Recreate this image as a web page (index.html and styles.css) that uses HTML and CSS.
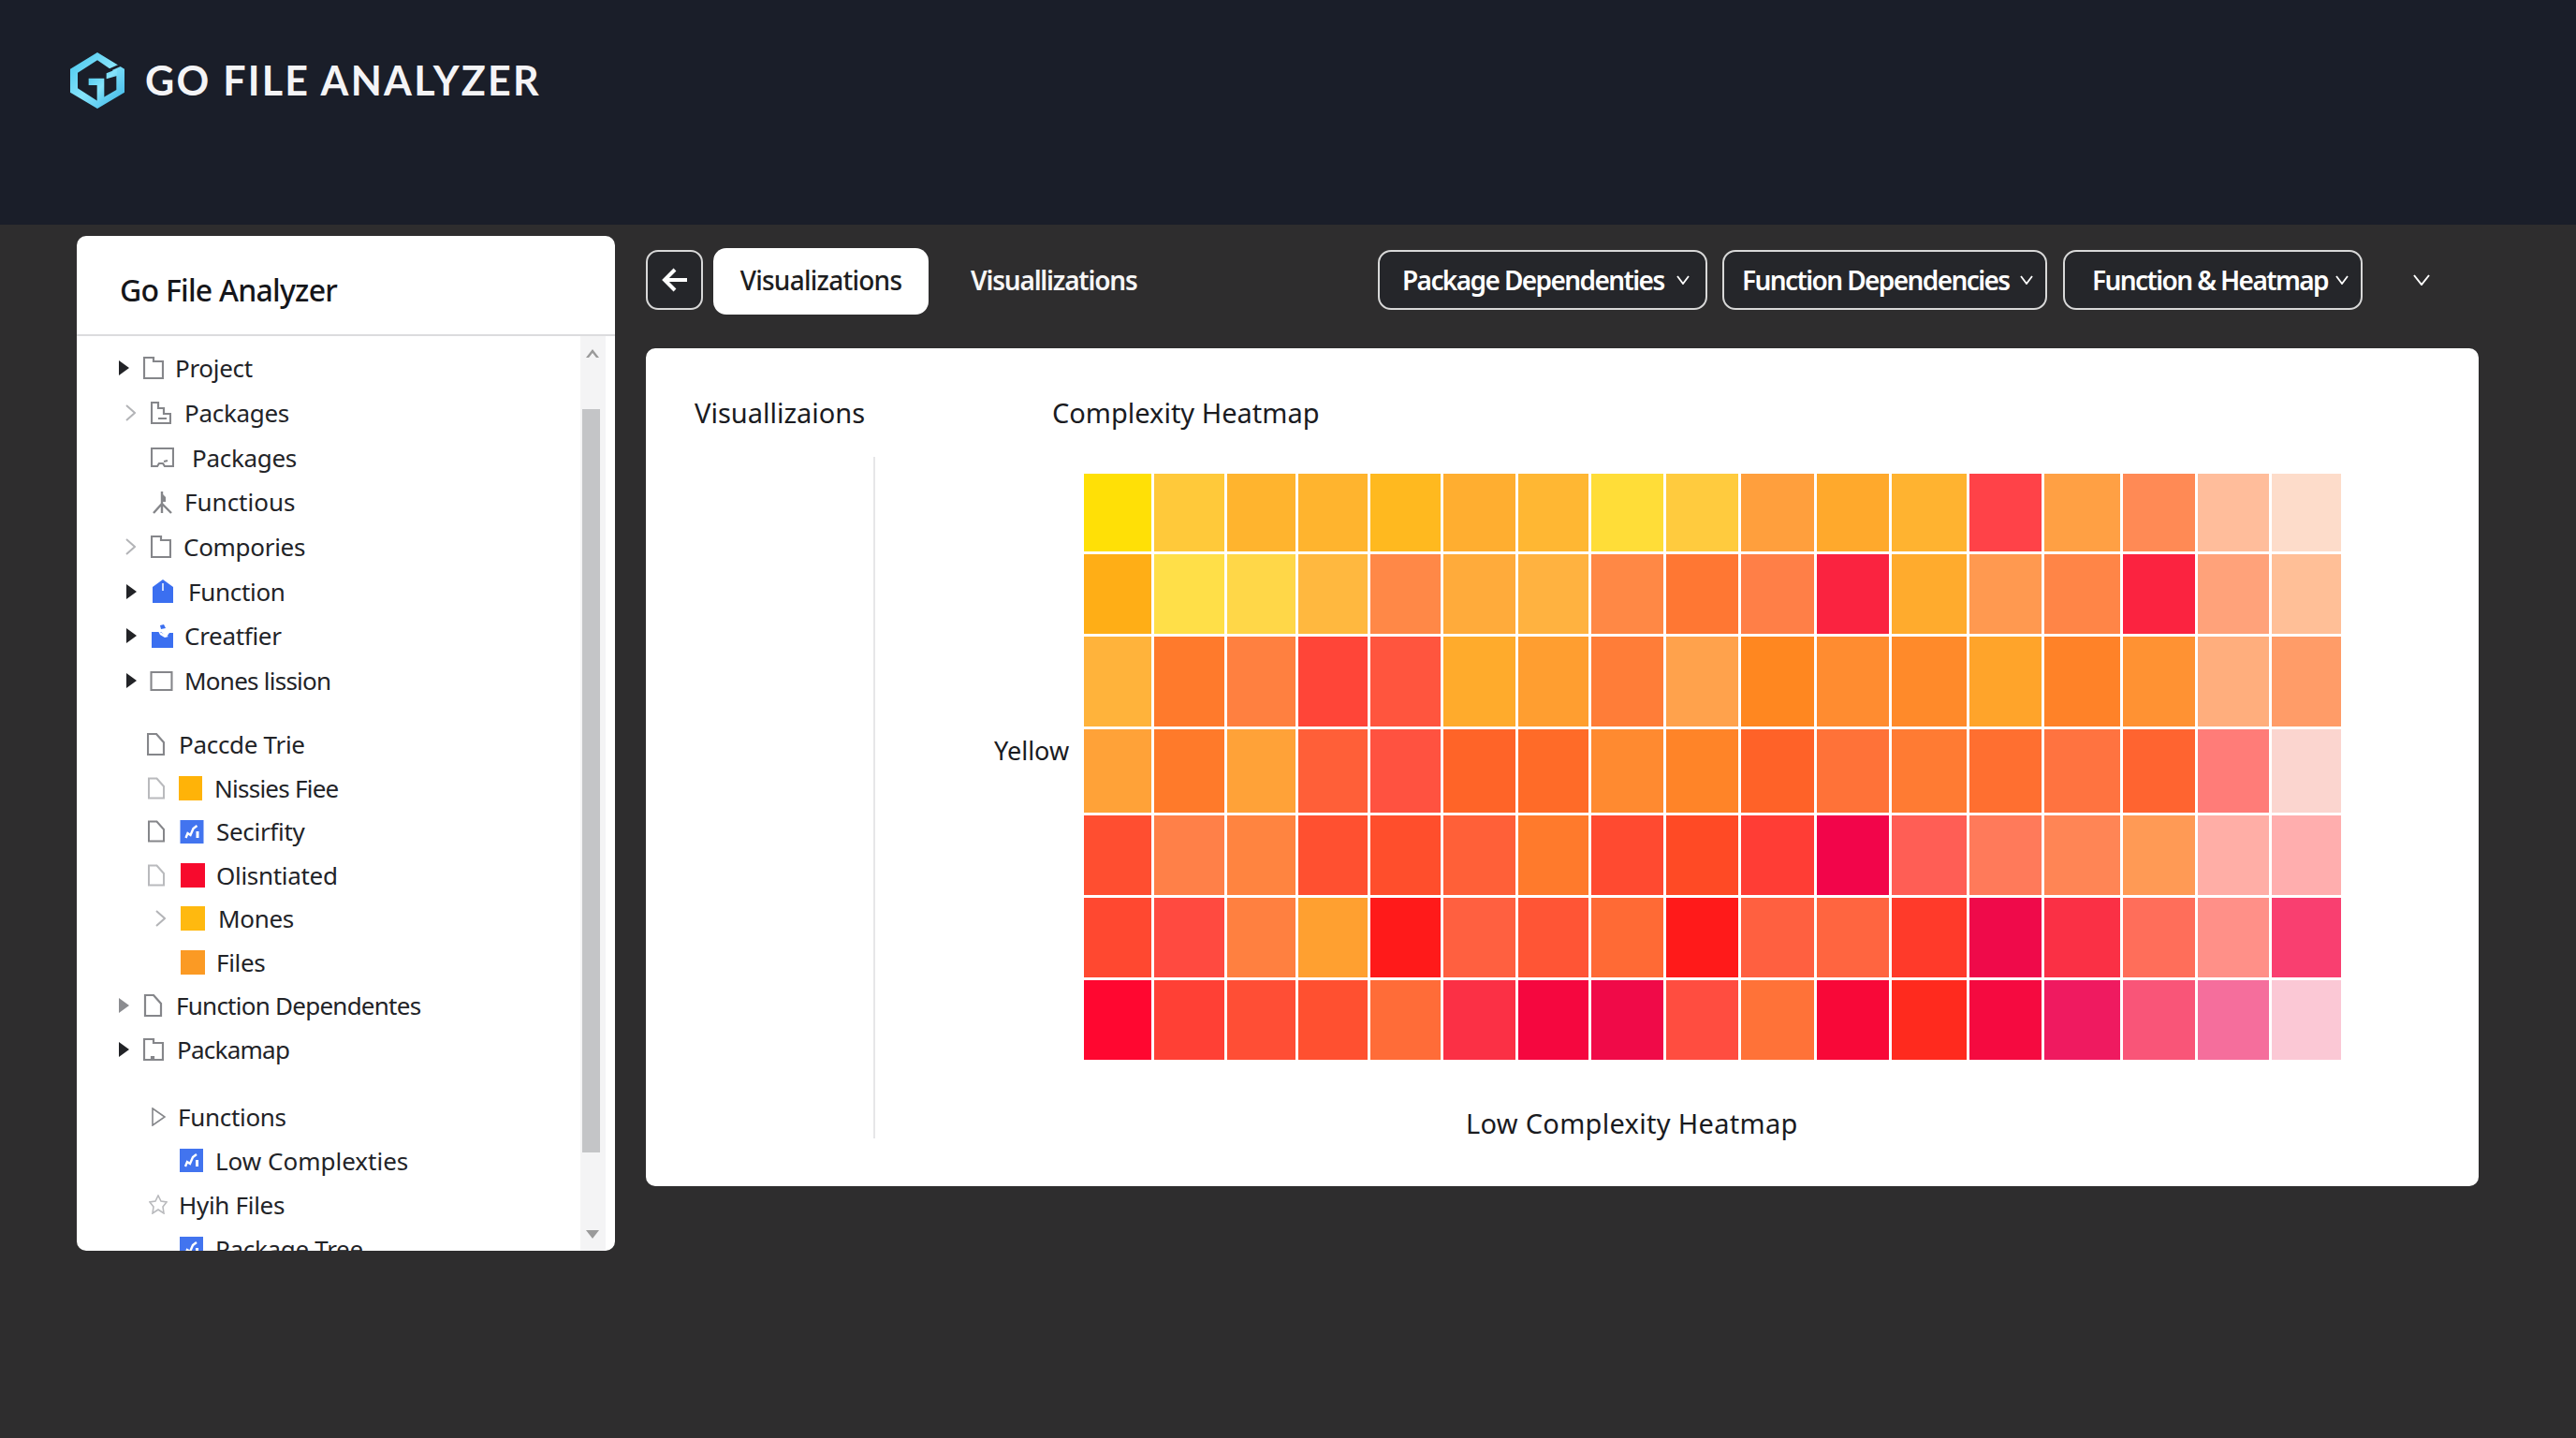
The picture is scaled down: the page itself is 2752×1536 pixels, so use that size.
FILE: index.html
```html
<!DOCTYPE html>
<html lang="en">
<head>
<meta charset="utf-8">
<title>Go File Analyzer</title>
<link rel="stylesheet" href="styles.css">
</head>
<body>
<svg class="defs" aria-hidden="true">
  <symbol id="caret" viewBox="0 0 11 16"><path d="M0 0L11 8L0 16Z" fill="currentColor"/></symbol>
  <symbol id="chev" viewBox="0 0 11 18"><path d="M1 1L10 9L1 17" fill="none" stroke="currentColor" stroke-width="2"/></symbol>
  <symbol id="folder" viewBox="0 0 22 24"><path d="M1 1H11V5H21V23H1Z" fill="none" stroke="currentColor" stroke-width="2.2"/></symbol>
  <symbol id="stair" viewBox="0 0 22 24"><path d="M1 1H8V7H14V13H21V23H1Z M8 18H17" fill="none" stroke="currentColor" stroke-width="2.2"/></symbol>
  <symbol id="tray" viewBox="0 0 25 21"><path d="M1 1H24V20H15L13 17L9 17L7 20H1Z M14 15L18 14" fill="none" stroke="currentColor" stroke-width="2.2"/></symbol>
  <symbol id="fork" viewBox="0 0 21 25"><path d="M10 1V24M10 14L1 24M10 14L20 24" fill="none" stroke="currentColor" stroke-width="2.4"/><path d="M9 2L14 7V12H9Z" fill="currentColor"/></symbol>
  <symbol id="house" viewBox="0 0 22 25"><path d="M11 0L22 8V25H0V8Z" fill="#3b6ff0"/><path d="M11 4V12" stroke="#fff" stroke-width="1.5"/></symbol>
  <symbol id="box" viewBox="0 0 23 25"><path d="M0 8H10L16 13L19 9L23 9V25H0Z" fill="#3b6ff0"/><path d="M9 1L13 0L15 4L10 5Z" fill="#3b6ff0"/><path d="M7 7L18 13L14 14L9 11Z" fill="#fff"/></symbol>
  <symbol id="frame" viewBox="0 0 25 22"><path d="M1 1H24V21H1Z" fill="none" stroke="currentColor" stroke-width="2.2"/></symbol>
  <symbol id="file" viewBox="0 0 19 24"><path d="M1 1H10L18 10V23H1Z" fill="none" stroke="currentColor" stroke-width="2.2"/></symbol>
  <symbol id="notch" viewBox="0 0 22 24"><path d="M1 1H11V5H21V23H11V20H9V23H1Z" fill="none" stroke="currentColor" stroke-width="2.2"/></symbol>
  <symbol id="tri" viewBox="0 0 15 20"><path d="M1 1L14 10L1 19Z" fill="none" stroke="currentColor" stroke-width="1.6"/></symbol>
  <symbol id="star" viewBox="0 0 20 21"><path d="M10 1L13 7L19 8L15 13L16 20L10 16L4 20L5 13L1 8L7 7Z" fill="none" stroke="currentColor" stroke-width="1.6"/></symbol>
  <symbol id="chart" viewBox="0 0 25 25"><rect width="25" height="25" fill="#4274ef"/><path d="M6 19L8 14L11 16L14 9L18 6" fill="none" stroke="#fff" stroke-width="2.4"/><path d="M17 12H20V19H17Z" fill="#fff"/></symbol>
</svg>

<header class="topbar">
  <svg class="logo" viewBox="26 25 174 180" aria-hidden="true">
    <defs>
      <linearGradient id="logoFill" x1="0" y1="0" x2="1" y2="1">
        <stop offset="0" stop-color="#44c4ec"/>
        <stop offset=".5" stop-color="#86e4fb"/>
        <stop offset="1" stop-color="#38b4e6"/>
      </linearGradient>
    </defs>
    <path fill="url(#logoFill)" fill-rule="evenodd" d="M113 25L200 78V153L113 205L26 153V78ZM113 50L50 90V140L113 180L174 145V92Z"/>
    <path fill="url(#logoFill)" d="M85 108H135V182H112V130H85ZM142 92L176 78V100L142 110Z"/>
    <path d="M145 84L196 62" stroke="#1a1e29" stroke-width="8"/>
  </svg>
  <span class="brand">GO FILE ANALYZER</span>
</header>

<main class="workspace">
  <aside class="sidebar">
    <h2 class="sidebar-title">Go File Analyzer</h2>
    <div class="sidebar-body">
      <div class="tree">
        <div class="group g1">
          <div class="row pl45"><svg class="c-caret dark"><use href="#caret"/></svg><svg class="ic w22 h24 ml15"><use href="#folder"/></svg><span class="ml12">Project</span></div>
          <div class="row pl52"><svg class="c-chev"><use href="#chev"/></svg><svg class="ic w22 h24 ml16"><use href="#stair"/></svg><span class="ml14">Packages</span></div>
          <div class="row pl79"><svg class="ic w25 h21"><use href="#tray"/></svg><span class="ml19">Packages</span></div>
          <div class="row pl81"><svg class="ic w21 h25"><use href="#fork"/></svg><span class="ml13 flat">Functious</span></div>
          <div class="row pl52"><svg class="c-chev"><use href="#chev"/></svg><svg class="ic w22 h24 ml16"><use href="#folder"/></svg><span class="ml13">Compories</span></div>
          <div class="row pl53"><svg class="c-caret dark"><use href="#caret"/></svg><svg class="ic w22 h25 ml17"><use href="#house"/></svg><span class="ml16">Function</span></div>
          <div class="row pl53"><svg class="c-caret dark"><use href="#caret"/></svg><svg class="ic w23 h25 ml16"><use href="#box"/></svg><span class="ml12">Creatfier</span></div>
          <div class="row pl53"><svg class="c-caret dark"><use href="#caret"/></svg><svg class="ic w25 h21 ml14"><use href="#frame"/></svg><span class="ml12 tight">Mones lission</span></div>
        </div>
        <div class="group g2">
          <div class="row pl75"><svg class="ic w19 h24"><use href="#file"/></svg><span class="ml15">Paccde Trie</span></div>
          <div class="row pl76"><svg class="ic w18 h24 pale"><use href="#file"/></svg><i class="sq amber ml15"></i><span class="ml13 tight">Nissies Fiee</span></div>
          <div class="row pl76"><svg class="ic w18 h24"><use href="#file"/></svg><svg class="ic w26 h25 ml16"><use href="#chart"/></svg><span class="ml13">Secirfity</span></div>
          <div class="row pl76"><svg class="ic w18 h24 pale"><use href="#file"/></svg><i class="sq red ml17"></i><span class="ml12">Olisntiated</span></div>
          <div class="row pl84"><svg class="c-chev"><use href="#chev"/></svg><i class="sq gold ml16"></i><span class="ml14">Mones</span></div>
          <div class="row pl111"><i class="sq orange"></i><span class="ml12">Files</span></div>
          <div class="row pl45"><svg class="c-caret mid"><use href="#caret"/></svg><svg class="ic w21 h24 ml15"><use href="#file"/></svg><span class="ml14 tight">Function Dependentes</span></div>
          <div class="row pl45"><svg class="c-caret dark"><use href="#caret"/></svg><svg class="ic w22 h24 ml15"><use href="#notch"/></svg><span class="ml14 tight">Packamap</span></div>
        </div>
        <div class="group g3">
          <div class="row pl80"><svg class="ic w15 h20"><use href="#tri"/></svg><span class="ml13">Functions</span></div>
          <div class="row pl110"><svg class="ic w25 h25"><use href="#chart"/></svg><span class="ml13 flat">Low Complexties</span></div>
          <div class="row pl77"><svg class="ic w20 h21 pale"><use href="#star"/></svg><span class="ml12">Hyih Files</span></div>
          <div class="row pl110"><svg class="ic w25 h25"><use href="#chart"/></svg><span class="ml13">Package Tree</span></div>
        </div>
      </div>
      <div class="scrollbar">
        <svg class="arrow" viewBox="0 0 14 9"><path d="M7 0L14 9H11L7 4L3 9H0Z" fill="#9a9a9a"/></svg>
        <div class="thumb"></div>
        <svg class="arrow" viewBox="0 0 14 9"><path d="M0 0H14L7 9Z" fill="#9a9a9a"/></svg>
      </div>
    </div>
  </aside>

  <section class="content">
    <nav class="toolbar">
      <button class="back" aria-label="Back"><svg viewBox="0 0 28 28"><path d="M27 14H4M14 3L3 14L14 25" fill="none" stroke="#fff" stroke-width="4"/></svg></button>
      <button class="tab active">Visualizations</button>
      <button class="tab plain">Visuallizations</button>
      <button class="drop d1">Package Dependenties<svg class="v"><path d="M1 1L7 9L13 1" fill="none" stroke="#fff" stroke-width="1.8"/></svg></button>
      <button class="drop d2">Function Dependencies<svg class="v"><path d="M1 1L7 9L13 1" fill="none" stroke="#fff" stroke-width="1.8"/></svg></button>
      <button class="drop d3">Function &amp; Heatmap<svg class="v"><path d="M1 1L7 9L13 1" fill="none" stroke="#fff" stroke-width="1.8"/></svg></button>
      <svg class="more" viewBox="0 0 18 12"><path d="M1 1L9 11L17 1" fill="none" stroke="#fff" stroke-width="2"/></svg>
    </nav>

    <article class="card">
      <div class="card-head">
        <h3 class="side-title">Visuallizaions</h3>
        <h3 class="chart-title">Complexity Heatmap</h3>
      </div>
      <div class="card-body">
        <div class="y-label">Yellow</div>
        <div class="chart">
          <div class="heatmap">
            <i style="background:#ffe006"></i><i style="background:#ffc93a"></i><i style="background:#ffb42e"></i><i style="background:#ffb42e"></i><i style="background:#ffb91f"></i><i style="background:#ffae30"></i><i style="background:#ffb733"></i><i style="background:#ffdd38"></i><i style="background:#ffcb3e"></i><i style="background:#ff9f3d"></i><i style="background:#ffa92c"></i><i style="background:#ffb330"></i><i style="background:#ff4248"></i><i style="background:#ffa044"></i><i style="background:#ff8a55"></i><i style="background:#ffbd9b"></i><i style="background:#fddcca"></i>
            <i style="background:#ffae16"></i><i style="background:#ffdf48"></i><i style="background:#ffd748"></i><i style="background:#ffb83f"></i><i style="background:#ff8847"></i><i style="background:#ffab3b"></i><i style="background:#ffb240"></i><i style="background:#ff8845"></i><i style="background:#ff7733"></i><i style="background:#ff7f47"></i><i style="background:#fa2340"></i><i style="background:#ffab2d"></i><i style="background:#ff9950"></i><i style="background:#ff8547"></i><i style="background:#fb2340"></i><i style="background:#ffa27a"></i><i style="background:#ffbf97"></i>
            <i style="background:#ffb33b"></i><i style="background:#ff7a2c"></i><i style="background:#ff8040"></i><i style="background:#ff4538"></i><i style="background:#ff553e"></i><i style="background:#ffab2c"></i><i style="background:#ff9e30"></i><i style="background:#ff7d38"></i><i style="background:#ffa24c"></i><i style="background:#ff8720"></i><i style="background:#ff8c30"></i><i style="background:#ff8a2a"></i><i style="background:#ffa42a"></i><i style="background:#ff8228"></i><i style="background:#ff9233"></i><i style="background:#ffae7d"></i><i style="background:#ff9c68"></i>
            <i style="background:#ffa238"></i><i style="background:#ff7a2a"></i><i style="background:#ffa238"></i><i style="background:#ff5f38"></i><i style="background:#ff5240"></i><i style="background:#ff6428"></i><i style="background:#ff6b28"></i><i style="background:#ff8a30"></i><i style="background:#ff8428"></i><i style="background:#ff6228"></i><i style="background:#ff7238"></i><i style="background:#ff7b33"></i><i style="background:#ff6f30"></i><i style="background:#ff7340"></i><i style="background:#ff6430"></i><i style="background:#ff7c78"></i><i style="background:#fbd5cf"></i>
            <i style="background:#ff4e30"></i><i style="background:#ff8048"></i><i style="background:#ff8440"></i><i style="background:#ff5030"></i><i style="background:#ff4e2c"></i><i style="background:#ff6038"></i><i style="background:#ff7a2c"></i><i style="background:#ff4a30"></i><i style="background:#ff4a25"></i><i style="background:#ff3d35"></i><i style="background:#f2054a"></i><i style="background:#ff5e55"></i><i style="background:#ff7a5a"></i><i style="background:#ff8555"></i><i style="background:#ff9a55"></i><i style="background:#ffaea6"></i><i style="background:#ffaeae"></i>
            <i style="background:#ff4830"></i><i style="background:#ff4a40"></i><i style="background:#ff8040"></i><i style="background:#ffa030"></i><i style="background:#ff1a1a"></i><i style="background:#ff6040"></i><i style="background:#ff5535"></i><i style="background:#ff6a35"></i><i style="background:#ff1a1a"></i><i style="background:#ff6040"></i><i style="background:#ff6540"></i><i style="background:#ff3a2a"></i><i style="background:#ef0a4a"></i><i style="background:#fa3045"></i><i style="background:#ff6e5a"></i><i style="background:#ff9088"></i><i style="background:#f93f70"></i>
            <i style="background:#ff0730"></i><i style="background:#ff4035"></i><i style="background:#ff4e35"></i><i style="background:#ff5030"></i><i style="background:#ff6c38"></i><i style="background:#fb3045"></i><i style="background:#f5073f"></i><i style="background:#f00a48"></i><i style="background:#ff4d40"></i><i style="background:#ff7238"></i><i style="background:#f80838"></i><i style="background:#ff2a1e"></i><i style="background:#f50a40"></i><i style="background:#ef1a60"></i><i style="background:#f95578"></i><i style="background:#f56e9c"></i><i style="background:#fbc8d5"></i>
          </div>
          <div class="caption">Low Complexity Heatmap</div>
        </div>
      </div>
    </article>
  </section>
</main>
</body>
</html>
```
FILE: styles.css
```css
* { box-sizing: border-box; }
html, body { margin: 0; height: 100%; }
body {
  width: 2752px;
  height: 1536px;
  overflow: hidden;
  background: #2e2d2e;
  font-family: "Noto Sans", "Open Sans", sans-serif;
  color: #1d1d20;
}
.defs { position: absolute; width: 0; height: 0; }

.topbar {
  height: 240px;
  background: #1a1e29;
  display: flex;
  align-items: flex-start;
  padding: 56px 0 0 75px;
}
.logo { width: 58px; height: 60px; flex: none; }
.brand {
  margin: 6px 0 0 22px;
  font-family: Lato, "Noto Sans", sans-serif;
  font-weight: 700;
  font-size: 43px;
  line-height: 48px;
  letter-spacing: 2.25px;
  color: #f4f4f6;
}

.workspace { display: flex; padding: 12px 0 0 82px; }

.sidebar {
  width: 575px;
  height: 1084px;
  flex: none;
  background: #fff;
  border-radius: 10px;
  overflow: hidden;
  display: flex;
  flex-direction: column;
}
.sidebar-title {
  margin: 0;
  height: 107px;
  flex: none;
  padding: 36px 0 0 46px;
  font-size: 32px;
  line-height: 44px;
  font-weight: 500;
  letter-spacing: -.75px;
  color: #15161a;
  border-bottom: 2px solid #dcdcde;
}
.sidebar-body { flex: 1; display: flex; min-height: 0; }
.tree { flex: 1; padding-top: 10.5px; overflow: hidden; font-size: 26px; color: #222327; }
.group.g1 .row { height: 47.7px; }
.group.g2 { margin-top: 21px; }
.group.g2 .row { height: 46.5px; }
.group.g3 { margin-top: 25px; }
.group.g3 .row { height: 47px; }
.row { display: flex; align-items: center; white-space: nowrap; }
.row span { letter-spacing: -.3px; }
.row span.tight { letter-spacing: -.75px; }
.row span.flat { letter-spacing: 0; }
.ic { flex: none; color: #85868a; display: block; }
.ic.pale { color: #b9babd; }
.c-caret { width: 11px; height: 16px; flex: none; }
.c-caret.dark { color: #222327; }
.c-caret.mid { color: #8b8c90; }
.c-chev { width: 11px; height: 18px; flex: none; color: #b3b4b7; }
.sq { display: block; width: 26px; height: 26px; flex: none; }
.sq.amber { background: #ffb308; width: 25px; }
.sq.red { background: #f70a2d; }
.sq.gold { background: #ffb90f; }
.sq.orange { background: #fb9a24; }

.w15 { width: 15px; } .w18 { width: 18px; } .w19 { width: 19px; } .w20 { width: 20px; }
.w21 { width: 21px; } .w22 { width: 22px; } .w23 { width: 23px; } .w25 { width: 25px; } .w26 { width: 26px; }
.h20 { height: 20px; } .h21 { height: 21px; } .h24 { height: 24px; } .h25 { height: 25px; }
.pl45 { padding-left: 45px; } .pl52 { padding-left: 52px; } .pl53 { padding-left: 53px; }
.pl75 { padding-left: 75px; } .pl76 { padding-left: 76px; } .pl77 { padding-left: 77px; }
.pl79 { padding-left: 79px; } .pl80 { padding-left: 80px; } .pl81 { padding-left: 81px; }
.pl84 { padding-left: 84px; } .pl110 { padding-left: 110px; } .pl111 { padding-left: 111px; }
.ml12 { margin-left: 12px; } .ml13 { margin-left: 13px; } .ml14 { margin-left: 14px; }
.ml15 { margin-left: 15px; } .ml16 { margin-left: 16px; } .ml17 { margin-left: 17px; } .ml19 { margin-left: 19px; }

.scrollbar {
  width: 27px;
  flex: none;
  margin-right: 10px;
  background: #f4f4f5;
  display: flex;
  flex-direction: column;
  align-items: flex-start;
  padding: 14px 0 14px 2px;
}
.arrow { width: 14px; height: 9px; margin-left: 4px; flex: none; }
.thumb { width: 19px; height: 794px; margin: 55px 0 83px; background: #c4c5c7; flex: none; }

.content { width: 1958px; margin-left: 33px; padding-top: 13px; flex: none; }
.toolbar { display: flex; align-items: center; height: 71px; padding-right: 52px; }
button { font-family: inherit; cursor: pointer; padding: 0; }
.back {
  width: 61px;
  height: 64px;
  margin-bottom: 3px;
  border: 2px solid #d8d8d8;
  border-radius: 13px;
  background: #25262a;
  display: flex;
  align-items: center;
  justify-content: center;
}
.back svg { width: 28px; height: 28px; }
.tab { border: 0; font-size: 28px; font-weight: 500; white-space: nowrap; padding-bottom: 3px; }
.tab.active { width: 230px; height: 71px; margin-left: 11px; background: #fff; border-radius: 14px; color: #1d1d20; letter-spacing: -.75px; }
.tab.plain { margin-left: 45px; background: none; color: #f6f6f6; font-weight: 600; letter-spacing: -1.2px; }
.drop {
  height: 64px;
  margin-bottom: 3px;
  border: 2px solid #d8d8d8;
  border-radius: 14px;
  background: #25262a;
  color: #fff;
  font-size: 28px;
  font-weight: 600;
  letter-spacing: -1.6px;
  display: flex;
  align-items: center;
  white-space: nowrap;
}
.drop .v { width: 14px; height: 10px; flex: none; }
.d1 { width: 352px; margin-left: auto; padding-left: 24px; }
.d1 .v { margin-left: 13px; }
.d2 { width: 347px; margin-left: 16px; padding-left: 19px; }
.d2 .v { margin-left: 11px; }
.d3 { width: 320px; margin-left: 17px; padding-left: 29px; }
.d3 .v { margin-left: 8px; }
.more { width: 18px; height: 12px; margin-left: 54px; flex: none; margin-bottom: 3px; }

.card {
  margin-top: 36px;
  height: 895px;
  background: #fff;
  border-radius: 10px;
  padding-top: 51px;
}
.card-head { display: flex; height: 36px; padding-left: 52px; margin-bottom: 29px; }
.card-head h3 { margin: 0; font-size: 29px; line-height: 36px; font-weight: 400; color: #1a1b1f; }
.side-title { flex: 0 0 382px; }
.card-body {
  margin-left: 243px;
  height: 728px;
  border-left: 2px solid #e6e6e8;
  display: flex;
  padding-left: 127px;
}
.y-label { width: 96px; flex: none; margin-top: 299px; font-size: 27px; line-height: 30px; color: #1a1b1f; }
.chart { padding-top: 18px; }
.heatmap {
  display: grid;
  grid-template-columns: 72px 75px 73px 74px 75px 77px 75px 77px 77px 78px 77px 80px 77px 81px 77px 76px 74px;
  grid-template-rows: 83px 85px 96px 89px 85px 85px 85px;
  gap: 3px;
}
.heatmap i { display: block; }
.caption { margin: 50px 0 0 408px; font-size: 29px; line-height: 36px; letter-spacing: .3px; color: #1a1b1f; }
```
